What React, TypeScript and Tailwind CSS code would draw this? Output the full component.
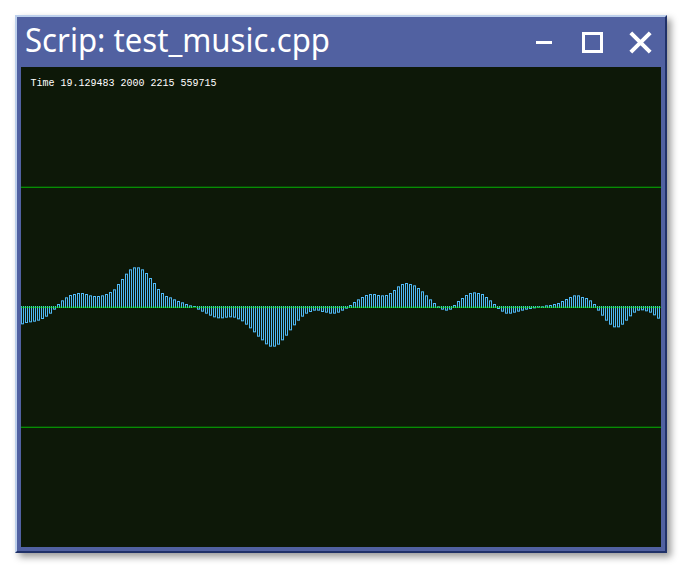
const samples = [
  223, 219, 217, 215, 212, 207, 200, 191, 179, 162, 151, 142, 135, 132, 129, 129, 132, 136, 138, 138,
  136, 132, 126, 118, 102, 87, 71, 58, 52, 52, 58, 69, 84, 99, 117, 129, 138, 142, 148, 153,
  157, 162, 166, 171, 179, 185, 191, 197, 202, 205, 205, 203, 202, 203, 208, 214, 224, 235, 247, 260,
  271, 283, 290, 290, 284, 271, 257, 241, 226, 212, 200, 191, 186, 182, 182, 186, 188, 191, 191, 188,
  182, 176, 165, 156, 148, 141, 135, 132, 132, 135, 136, 135, 129, 120, 109, 102, 99, 102, 106, 114,
  124, 136, 148, 159, 169, 179, 182, 179, 165, 153, 144, 135, 129, 127, 129, 132, 141, 151, 162, 177,
  185, 191, 191, 188, 185, 182, 179, 177, 175, 173, 169, 166, 165, 162, 159, 153, 147, 141, 136, 136,
  141, 144, 151, 162, 182, 197, 212, 224, 232, 232, 224, 212, 199, 188, 182, 181, 184, 188, 196, 206,
];

// The waveform swings around the middle of the 480px canvas.
const BASE = 240;

// A hollow bar, three pixels wide, with its open end on the base line.
function Bar({ index, value }: { index: number; value: number }) {
  const x = index * 4;
  const edge = 183 + value / 3;
  const up = edge < BASE;
  const top = up ? edge : BASE - 1;
  const bottom = up ? BASE + 1 : edge;
  const height = Math.max(1, bottom - top);
  return (
    <g>
      <rect x={x} y={top} width={1} height={height} />
      <rect x={x + 2} y={top} width={1} height={height} />
      <rect x={x + 1} y={up ? top : bottom - 1} width={1} height={1} />
    </g>
  );
}

function GridLine({ y }: { y: number }) {
  return (
    <g fill="#00ff00">
      <rect x={0} y={y - 1} width={640} height={1} fillOpacity={0.18} />
      <rect x={0} y={y} width={640} height={1} fillOpacity={0.5} />
    </g>
  );
}

function Waveform() {
  return (
    <svg className="block h-[480px] w-[640px]" viewBox="0 0 640 480">
      <g fill="#50b8f4">
        {samples.map((value, i) => (
          <Bar key={i} index={i} value={value} />
        ))}
      </g>
      <GridLine y={120} />
      <GridLine y={240} />
      <GridLine y={360} />
    </svg>
  );
}

export default function App() {
  return (
    <div className="h-[572px] w-[686px] overflow-hidden bg-white p-[15px]">
      <div className="h-[538px] w-[652px] border-2 border-t-[#bdd0ec] border-r-[#203168] border-b-[#203168] border-l-[#bdd0ec] bg-[#5161a1] px-1 shadow-[4px_4px_7px_rgba(0,0,0,0.4)]">
        <header className="flex h-[50px] items-center justify-between">
          <h1 className="[font-family:'Noto_Sans',sans-serif]">
            <svg className="block h-[50px] w-[320px] overflow-visible">
              <text x={4} y={35} fill="#fff" fontSize={32} textLength={305} lengthAdjust="spacingAndGlyphs">
                Scrip: test_music.cpp
              </text>
            </svg>
          </h1>
          <div className="flex h-[50px] items-center pr-[9px]">
            <span className="mr-[30px] h-[3px] w-4 bg-white" />
            <span className="mr-[26px] size-[21px] border-[3px] border-white" />
            <svg className="size-[23px]" viewBox="0 0 23 23" stroke="#fff" strokeWidth={4}>
              <path d="M1.8 1.8 21.2 21.2M21.2 1.8 1.8 21.2" />
            </svg>
          </div>
        </header>
        <main className="relative h-[480px] w-[640px] bg-[#0d1808]">
          <Waveform />
          <p className="absolute top-[10px] left-[9.5px] text-[10px] leading-[14px] whitespace-pre text-white [font-family:'Liberation_Mono',monospace]">
            Time 19.129483 2000 2215 559715
          </p>
        </main>
      </div>
    </div>
  );
}
